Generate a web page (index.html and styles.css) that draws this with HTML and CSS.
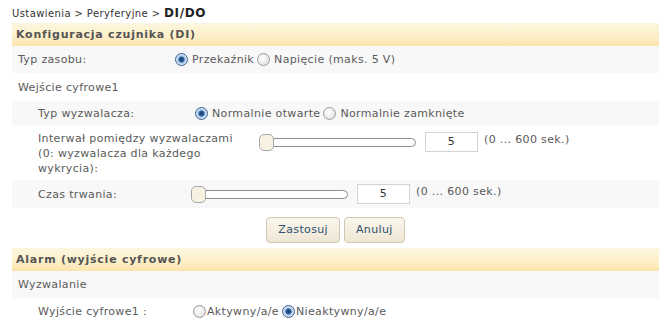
FILE: index.html
```html
<html>
<head>
<meta charset="UTF-8">
<link rel="stylesheet" href="styles.css">
</head>
<body>
<div class="strona">
	<div class="sciezka">Ustawienia &gt; Peryferyjne &gt; <b>DI/DO</b></div>

	<div class="naglowek">Konfiguracja czujnika (DI)</div>
	<div class="wiersz szary">
		<div class="etykieta" style="width:157px">Typ zasobu:</div>
		<div class="pola">
			<span class="radio wlaczony"></span>Przekaźnik <span class="radio"></span>Napięcie (maks. 5 V)
		</div>
	</div>
	<div class="wiersz wysoki">
		<div class="etykieta">Wejście cyfrowe1</div>
	</div>
	<div class="wiersz szary wciecie niski">
		<div class="etykieta" style="width:157px">Typ wyzwalacza:</div>
		<div class="pola">
			<span class="radio wlaczony"></span>Normalnie otwarte <span class="radio"></span>Normalnie zamknięte
		</div>
	</div>
	<div class="wiersz wciecie wielo">
		<div class="etykieta" style="width:205px;margin-right:16px">Interwał pomiędzy wyzwalaczami (0: wyzwalacza dla każdego wykrycia):</div>
		<div class="pola">
			<span class="suwak"><span class="uchwyt"></span></span>
			<span class="pole">5</span>
			<span class="zakres">(0 ... 600 sek.)</span>
		</div>
	</div>
	<div class="wiersz szary wciecie wysoki">
		<div class="etykieta" style="width:153px">Czas trwania:</div>
		<div class="pola">
			<span class="suwak"><span class="uchwyt"></span></span>
			<span class="pole">5</span>
			<span class="zakres">(0 ... 600 sek.)</span>
		</div>
	</div>
	<div class="przyciski">
		<span class="przycisk">Zastosuj</span>
		<span class="przycisk">Anuluj</span>
	</div>

	<div class="naglowek">Alarm (wyjście cyfrowe)</div>
	<div class="wiersz szary">
		<div class="etykieta">Wyzwalanie</div>
	</div>
	<div class="wiersz wciecie">
		<div class="etykieta" style="width:155px">Wyjście cyfrowe1 :</div>
		<div class="pola">
			<span class="radio ciasny"></span>Aktywny/a/e <span class="radio wlaczony ciasny"></span>Nieaktywny/a/e
		</div>
	</div>
</div>
</body>
</html>
```

FILE: styles.css
```css
body{
	margin: 0;
	background: #ffffff;
	font-family: "DejaVu Sans", Verdana, sans-serif;
	font-size: 11px;
	letter-spacing: 0.35px;
	color: #5a5a5a;
}
.strona{
	padding-left: 12px;
}
.sciezka{
	height: 23px;
	line-height: 26px;
	font-size: 10px;
	color: #333333;
	letter-spacing: 0.4px;
}
.sciezka b{
	font-size: 12px;
	color: #222222;
	letter-spacing: 0.6px;
}
.naglowek{
	height: 23px;
	line-height: 23px;
	padding-left: 4px;
	font-weight: bold;
	letter-spacing: 0.75px;
	color: #555555;
	background: linear-gradient(#fdf6e0, #fdefc7 60%, #fce3ad);
}
.wiersz{
	display: flex;
	align-items: center;
	height: 27px;
	padding-left: 6px;
}
.wysoki{
	height: 28px;
}
.niski{
	height: 25px;
}
.szary{
	background-color: #f8f8f8;
}
.wciecie{
	padding-left: 26px;
}
.wielo{
	height: auto;
	align-items: flex-start;
	padding-top: 5px;
	padding-bottom: 4px;
	line-height: 15px;
}
.wielo .pola{
	padding-top: 1px;
}
.etykieta{
	flex: none;
}
.pola{
	display: flex;
	align-items: center;
	white-space: nowrap;
}
.radio{
	display: inline-block;
	box-sizing: border-box;
	width: 13px;
	height: 13px;
	margin: 0 4px 0 0;
	border-radius: 50%;
	border: 1px solid #9a9a9a;
	background: radial-gradient(circle at 40% 40%, #ffffff, #dcdcdc);
}
.pola span.radio:not(:first-child){
	margin-left: 3px;
}
.radio.ciasny{
	margin-right: 1px;
}
.wlaczony{
	border-color: #3a5f8c;
	background: radial-gradient(circle, #1c3f6e 0, #2a5c9a 2.5px, #a9c8ea 3.5px, #e8f1fb 6px);
}
.suwak{
	position: relative;
	display: inline-block;
	box-sizing: border-box;
	width: 157px;
	height: 9px;
	border: 1px solid #8c8c8c;
	border-radius: 5px;
	background: #ffffff;
}
.uchwyt{
	position: absolute;
	left: -1px;
	top: -5px;
	box-sizing: border-box;
	width: 15px;
	height: 17px;
	border: 1px solid #a8a8a8;
	border-radius: 5px;
	background: #f6f1e1;
}
.pole{
	display: inline-block;
	box-sizing: border-box;
	width: 53px;
	height: 20px;
	line-height: 18px;
	margin-left: 9px;
	border: 1px solid #d3d3d3;
	background: #ffffff;
	text-align: center;
	color: #333333;
}
.zakres{
	margin-left: 6px;
	margin-top: -6px;
}
.przyciski{
	display: flex;
	justify-content: center;
	gap: 4px;
	padding: 9px 0 5px 0;
}
.przycisk{
	display: inline-block;
	box-sizing: border-box;
	height: 26px;
	line-height: 24px;
	padding: 0 11px;
	border: 1px solid #cfc6b4;
	border-radius: 4px;
	background: linear-gradient(#faf6ee, #efe6d3);
	color: #2f4f6f;
}
```
